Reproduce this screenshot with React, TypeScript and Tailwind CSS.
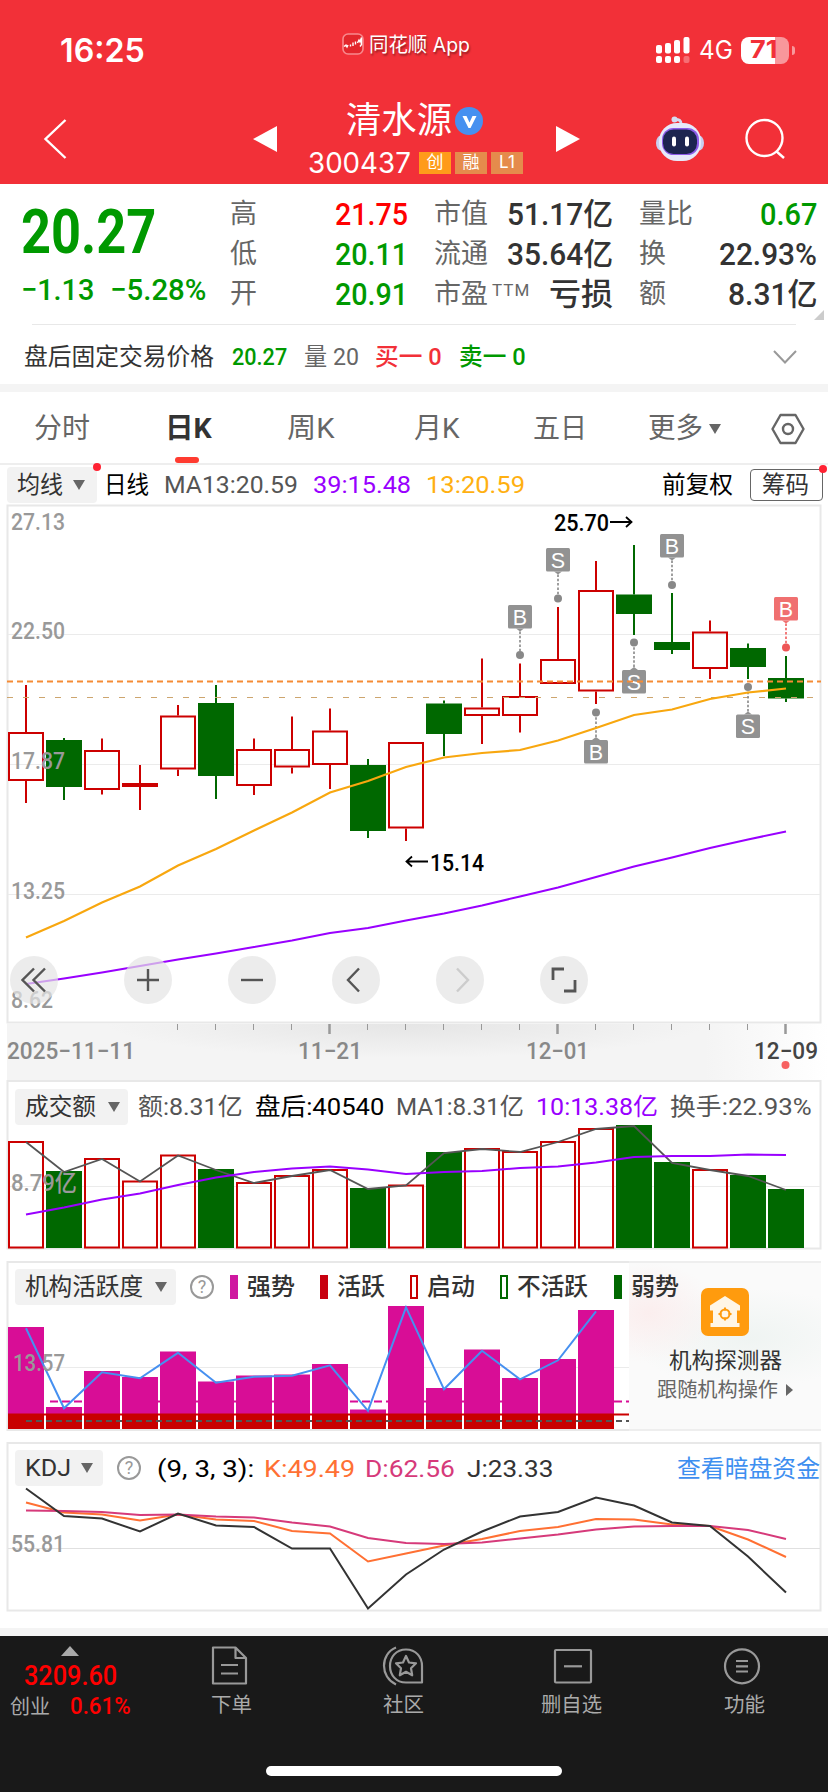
import { useLayoutEffect, useRef } from 'react';
import type { ReactNode } from 'react';
import clsx from 'clsx';

type Candle = { up: boolean; high: number; top: number; bottom: number; low: number };
type Mark = { i: number; type: 'B' | 'S'; box: number; dot: number; active?: boolean };

const UP = '#cc0000';
const DOWN = '#006800';
const STEP = 38;
const FIRST_X = 26;

const cx = (i: number) => FIRST_X + i * STEP;
const toPoints = (ys: number[]) => ys.map((y, i) => `${cx(i)},${y}`).join(' ');

const c = (up: boolean, high: number, top: number, bottom: number, low: number): Candle => ({
  up,
  high,
  top,
  bottom,
  low,
});

const candles: Candle[] = [
  c(true, 685, 732, 781, 803),
  c(false, 738, 740, 787, 800),
  c(true, 738.5, 750, 790, 794.5),
  c(true, 765, 783, 787, 810),
  c(true, 705, 715.5, 769.5, 776),
  c(false, 685, 703, 776, 799),
  c(true, 738.5, 749, 786, 795),
  c(true, 716.5, 749, 767.5, 773.5),
  c(true, 708.5, 730.5, 765, 789),
  c(false, 759, 765, 831, 838),
  c(true, 742, 742, 828.5, 841),
  c(false, 700.5, 703.5, 734, 756),
  c(true, 658.5, 707.5, 716, 744),
  c(true, 663.5, 696, 716, 732.5),
  c(true, 607, 659, 684, 684),
  c(true, 561, 590, 691.5, 704),
  c(false, 545, 594.5, 614, 635),
  c(false, 593, 642, 650, 654),
  c(true, 620.5, 631.5, 669, 679),
  c(false, 643.5, 648, 667, 679),
  c(false, 656, 678, 698.5, 702),
];

const ma13 = [
  937.5, 921, 902.5, 886.5, 865.5, 849, 830.5, 812.5, 792.5, 781, 767, 757.5, 753, 750, 740.5, 728,
  715, 709.5, 699, 692.5, 688.5,
];
const ma39 = [
  984, 978.5, 972.5, 966, 959.5, 953.5, 947, 940.5, 933, 928, 920.5, 913.5, 905.5, 896.5, 887.5,
  877, 866.5, 857.5, 848, 839.5, 831.5,
];

const marks: Mark[] = [
  { i: 13, type: 'B', box: 605, dot: 655 },
  { i: 14, type: 'S', box: 548, dot: 598.5 },
  { i: 15, type: 'B', box: 740, dot: 712.5 },
  { i: 16, type: 'S', box: 670, dot: 642.5 },
  { i: 17, type: 'B', box: 534, dot: 585 },
  { i: 19, type: 'S', box: 714.5, dot: 687 },
  { i: 20, type: 'B', box: 597, dot: 647.5, active: true },
];

const volume = [
  1141, 1171, 1158, 1180.5, 1154.5, 1169, 1182, 1175, 1169, 1188, 1184.5, 1152, 1148, 1151, 1141,
  1128, 1125, 1162, 1169, 1175, 1189,
];
const volumeMa = [
  1214.5, 1207.5, 1199.5, 1193.5, 1185, 1177.5, 1172, 1168.5, 1166.5, 1169.5, 1174, 1172, 1171,
  1168, 1166.5, 1162.5, 1157, 1156, 1156, 1154.5, 1155,
];

const activity = [
  1327, 1407, 1371, 1377, 1351.5, 1381.5, 1375.5, 1374.5, 1364, 1409.5, 1306, 1388, 1349.5, 1378,
  1359, 1310,
];

const kLine = [
  1502.5, 1512.5, 1514.5, 1520.5, 1514.5, 1519.5, 1521, 1531, 1533.5, 1561.5, 1553.5, 1545.5, 1539,
  1531, 1527, 1519, 1519.5, 1524.5, 1526, 1539.5, 1557,
];
const dLine = [
  1510.5, 1511, 1512, 1515, 1514.5, 1516.5, 1517.5, 1522.5, 1526.5, 1538, 1543, 1544, 1542.5,
  1538.5, 1534.5, 1529.5, 1526.5, 1526, 1526, 1530, 1539,
];
const jLine = [
  1488.5, 1516, 1518.5, 1531.5, 1513.5, 1525.5, 1527, 1548.5, 1548.5, 1608.5, 1574.5, 1549.5,
  1531.5, 1516.5, 1512, 1497.5, 1505.5, 1522.5, 1526, 1556.5, 1592.5,
];

// Squeezes its text horizontally so that it fills the width set by className.
function Fit({ className, children }: { className?: string; children: ReactNode }) {
  const outer = useRef<HTMLSpanElement>(null);
  const inner = useRef<HTMLSpanElement>(null);

  useLayoutEffect(() => {
    if (!outer.current || !inner.current) return;
    const scale = outer.current.clientWidth / inner.current.offsetWidth;
    inner.current.style.transform = `scaleX(${scale})`;
  }, []);

  return (
    <span ref={outer} className={clsx('block shrink-0 leading-none whitespace-nowrap', className)}>
      <span ref={inner} className="inline-block origin-left">
        {children}
      </span>
    </span>
  );
}

function Caret({ className }: { className?: string }) {
  return (
    <svg viewBox="0 0 12 10" className={clsx('h-2.5 w-3 shrink-0', className)}>
      <path d="M0 0h12L6 10z" fill="#666" />
    </svg>
  );
}

function Help({ className }: { className?: string }) {
  return (
    <span
      className={clsx(
        'flex size-6 shrink-0 items-center justify-center rounded-full border-2 border-[#999] text-[18px] leading-none font-normal text-[#999]',
        className,
      )}
    >
      ?
    </span>
  );
}

function AxisLabel({ x, y, w, children }: { x: number; y: number; w: number; children: string }) {
  return (
    <text x={x} y={y} textLength={w} lengthAdjust="spacingAndGlyphs" fontSize="24" fontWeight="500" fill="#999">
      {children}
    </text>
  );
}

function StatusBar() {
  return (
    <div className="flex h-[88px] items-center pl-[60px] font-['Inter','Noto_Sans_CJK_SC',sans-serif]">
      <Fit className="mt-3 w-[85px] text-[33px] font-semibold">16:25</Fit>
      <svg viewBox="0 0 22 22" className="ml-[197px] size-[22px]" fill="none">
        <rect x="1" y="1" width="20" height="20" rx="5" fill="#e3262c" stroke="#f8898d" strokeWidth="1.6" />
        <path d="M2 13.500l2-1.500 1 2 1-2M8.500 13.500v-2M11 13V9.500M13.500 11.500V8.500M15.500 10l1.500-3 1 2 1.500-4.500v7l-1.500 2" stroke="#fff" strokeWidth="1.4" />
      </svg>
      <Fit className="mt-0.5 ml-[5px] w-[101px] text-[20px] [text-shadow:1px_2px_2px_rgba(0,0,0,0.4)]">同花顺 App</Fit>
      <svg viewBox="0 0 34 26" className="mt-3 ml-[186px] h-[26px] w-[34px]" fill="#fff">
        <rect x="0" y="8" width="6" height="8.5" rx="2" />
        <rect x="9" y="6" width="6" height="10.5" rx="2" />
        <rect x="18" y="3" width="6" height="13.5" rx="2" />
        <rect x="27.5" y="0" width="6" height="16.5" rx="2" />
        <rect x="0" y="19" width="6" height="7" rx="2" />
        <rect x="9" y="19" width="6" height="7" rx="2" />
        <rect x="18" y="19" width="6" height="7" rx="2" />
        <rect x="27.5" y="19" width="6" height="7" rx="2" opacity="0.3" />
      </svg>
      <Fit className="mt-3 ml-[9px] w-[34px] text-[25px]">4G</Fit>
      <div className="mt-3 ml-2 flex items-center gap-[3px]">
        <div className="flex h-[27px] w-12 items-center rounded-lg bg-[linear-gradient(to_right,#fff_71%,#f8979b_71%)] pl-[9px] text-[#f23038]">
          <Fit className="w-[27px] text-[24px] font-bold">71</Fit>
        </div>
        <div className="h-[9px] w-[3px] rounded-r bg-[#f8979b]" />
      </div>
    </div>
  );
}

function Robot() {
  return (
    <svg viewBox="0 0 48 46" className="mt-1.5 ml-[76px] h-[46px] w-12" fill="none">
      <path d="M25 8c0-4-2-4.500-6-4.500" stroke="#d5dcf2" strokeWidth="3" />
      <circle cx="18.500" cy="3.500" r="3" fill="#d5dcf2" />
      <ellipse cx="5" cy="27" rx="5" ry="7.500" fill="#c8cff0" />
      <ellipse cx="43" cy="27" rx="5" ry="7.500" fill="#c8cff0" />
      <rect x="3" y="7" width="42" height="38" rx="18" fill="#e6eafa" />
      <rect x="6" y="12" width="37" height="27" rx="11.500" fill="#8c5be8" />
      <rect x="7" y="13.500" width="34" height="24.500" rx="10.500" fill="#1c2550" />
      <rect x="16" y="20.500" width="4" height="10" rx="2" fill="#fff" />
      <rect x="29" y="20.500" width="4" height="10" rx="2" fill="#fff" />
    </svg>
  );
}

function NavBar() {
  return (
    <div className="flex h-24 items-center pl-[43px]">
      <svg viewBox="0 0 24 40" className="mt-1.5 h-10 w-6" fill="none" stroke="#fff" strokeWidth="2.4">
        <path d="M22.500 1L2.500 20l20 19" />
      </svg>
      <svg viewBox="0 0 24 26" className="mt-1.5 ml-[186px] h-[26px] w-6">
        <path d="M24 0v26L0 13z" fill="#fff" />
      </svg>
      <div className="mt-2 ml-[31px] flex w-[216px] flex-col items-start">
        <div className="flex items-center pl-[38px]">
          <Fit className="w-[106px] text-[36px]">清水源</Fit>
          <svg viewBox="0 0 28 28" className="ml-[3px] size-7">
            <circle cx="14" cy="14" r="14" fill="#4690f0" />
            <path d="M7.500 9h4l3 6.500L17.500 9h4l-6 12h-2z" fill="#fff" />
          </svg>
        </div>
        <div className="mt-2.5 flex items-center gap-1 font-['Inter','Noto_Sans_CJK_SC',sans-serif]">
          <Fit className="mr-1 w-[103px] text-[28px]">300437</Fit>
          <span className="flex h-[22px] w-8 items-center justify-center bg-[#ff9b1a] text-[17px] text-white">创</span>
          <span className="flex h-[22px] w-8 items-center justify-center bg-[#e58b4c] text-[17px] text-white">融</span>
          <span className="flex h-[22px] w-8 items-center justify-center bg-[#e58b4c] text-[17px] text-white">L1</span>
        </div>
      </div>
      <svg viewBox="0 0 24 26" className="mt-1.5 ml-8 h-[26px] w-6">
        <path d="M0 0v26l24-13z" fill="#fff" />
      </svg>
      <Robot />
      <svg viewBox="0 0 42 42" className="mt-1.5 ml-10 size-[42px]" fill="none" stroke="#fff" strokeWidth="2.400">
        <circle cx="20.500" cy="20" r="18" />
        <path d="M32 33l8 7" />
      </svg>
    </div>
  );
}

function Stat({ label, className, children }: { label: ReactNode; className?: string; children: ReactNode }) {
  return (
    <div className={clsx('flex h-10 items-center justify-between', className)}>
      <span className="flex items-start text-[27px] leading-none font-normal text-[#666]">{label}</span>
      {children}
    </div>
  );
}

function Quote() {
  return (
    <section className="h-[200px]">
      <div className="flex h-[140px]">
        <div className="flex w-[230px] flex-col pl-[21px] text-[#009900]">
          <Fit className="mt-[17px] w-[135px] text-[62px] font-bold">20.27</Fit>
          <div className="mt-3 flex gap-4 text-[30px] font-medium">
            <Fit className="w-[73px]">−1.13</Fit>
            <Fit className="w-[96px]">−5.28%</Fit>
          </div>
        </div>
        <div className="w-[178px] pt-[10px] text-[31px] font-medium text-[#009900]">
          <Stat label="高" className="text-[#ff0000]">
            <Fit className="w-[73px]">21.75</Fit>
          </Stat>
          <Stat label="低">
            <Fit className="w-[73px]">20.11</Fit>
          </Stat>
          <Stat label="开">
            <Fit className="w-[73px]">20.91</Fit>
          </Stat>
        </div>
        <div className="ml-[26px] w-[179px] pt-[10px] text-[31px] font-medium text-[#333]">
          <Stat label="市值">
            <Fit className="w-[106px]">51.17亿</Fit>
          </Stat>
          <Stat label="流通">
            <Fit className="w-[106px]">35.64亿</Fit>
          </Stat>
          <Stat
            label={
              <>
                市盈<sup className="top-0 ml-1 pt-px text-[17px] leading-none tracking-[1px]">TTM</sup>
              </>
            }
          >
            <Fit className="w-[64px]">亏损</Fit>
          </Stat>
        </div>
        <div className="ml-[26px] w-[178px] pt-[10px] text-[31px] font-medium text-[#333]">
          <Stat label="量比" className="text-[#009900]">
            <Fit className="w-[57px]">0.67</Fit>
          </Stat>
          <Stat label="换">
            <Fit className="w-[98px]">22.93%</Fit>
          </Stat>
          <Stat label="额">
            <Fit className="w-[89px]">8.31亿</Fit>
          </Stat>
        </div>
        <svg viewBox="0 0 10 10" className="mt-[126px] ml-[-3px] size-2.5 shrink-0">
          <path d="M10 0v10H0z" fill="#ccc" />
        </svg>
      </div>
      <div className="mr-8 ml-8 h-px bg-[#e8e8e8]" />
      <div className="flex h-[59px] items-center pt-1 pl-6 text-[24px]">
        <Fit className="w-[190px] text-[#333]">盘后固定交易价格</Fit>
        <Fit className="ml-[18px] w-[55px] font-medium text-[#009900]">20.27</Fit>
        <Fit className="ml-[17px] w-[55px] text-[#666]">量 20</Fit>
        <Fit className="ml-4 w-[67px] font-medium text-[#f23038]">买一 0</Fit>
        <Fit className="ml-[17px] w-[67px] font-medium text-[#009900]">卖一 0</Fit>
        <svg viewBox="0 0 24 14" className="ml-[247px] h-3.5 w-6" fill="none" stroke="#999" strokeWidth="2">
          <path d="M1 1l11 11.500L23 1" />
        </svg>
      </div>
    </section>
  );
}

function Tabs() {
  return (
    <nav className="flex h-[73px] items-center border-b-2 border-[#eee] pt-0.5 pl-[34px] text-[28px] text-[#666]">
      <Fit className="w-[56px]">分时</Fit>
      <div className="relative ml-[75px] flex h-full items-center">
        <Fit className="w-[47px] font-bold text-[#333]">日K</Fit>
        <div className="absolute bottom-0 left-[10px] h-1.5 w-6 rounded-full bg-[#ff3b30]" />
      </div>
      <Fit className="ml-[75px] w-[48px]">周K</Fit>
      <Fit className="ml-[79px] w-[46px]">月K</Fit>
      <Fit className="ml-[73px] w-[54px]">五日</Fit>
      <Fit className="ml-[61px] w-[55px]">更多</Fit>
      <Caret className="ml-[6px]" />
      <svg viewBox="0 0 34 32" className="ml-[50px] h-8 w-[34px]" fill="none" stroke="#666" strokeWidth="2.400">
        <path d="M9.500 2h15L32.500 16l-8 14h-15L1.500 16z" strokeLinejoin="round" />
        <circle cx="17" cy="16" r="5" />
      </svg>
    </nav>
  );
}

function IndicatorBar() {
  return (
    <div className="flex h-[39px] items-center pl-[7px] text-[24px]">
      <div className="relative flex h-9 w-[90px] items-center rounded bg-[#f2f2f2] pl-2.5 text-[#333]">
        <Fit className="w-[46px]">均线</Fit>
        <Caret className="ml-2.5" />
        <span className="absolute -top-1 -right-1 size-2 rounded-full bg-[#ff2233]" />
      </div>
      <Fit className="ml-[7px] w-[45px]">日线</Fit>
      <Fit className="ml-[15px] w-[134px] text-[#555]">MA13:20.59</Fit>
      <Fit className="ml-[15px] w-[98px] text-[#9900ff]">39:15.48</Fit>
      <Fit className="ml-[15px] w-[99px] text-[#ffb011]">13:20.59</Fit>
      <Fit className="ml-[137px] w-[71px]">前复权</Fit>
      <div className="relative ml-[17px] flex h-8 w-[73px] items-center rounded border-[1.5px] border-[#666] pl-[11px] text-[#333]">
        <Fit className="w-[47px]">筹码</Fit>
        <span className="absolute -top-[5px] -right-[5px] size-2 rounded-full bg-[#ff2233]" />
      </div>
    </div>
  );
}

function CandleShape({ candle, x }: { candle: Candle; x: number }) {
  const { up, high, top, bottom, low } = candle;
  const color = up ? UP : DOWN;
  return (
    <g>
      <path d={`M${x} ${high}V${top}M${x} ${bottom}V${low}`} stroke={color} strokeWidth="2" />
      {up ? (
        <rect x={x - 17} y={top + 1} width="34" height={bottom - top - 2} fill="none" stroke={color} strokeWidth="2" />
      ) : (
        <rect x={x - 18} y={top} width="36" height={bottom - top} fill={color} />
      )}
    </g>
  );
}

function MarkShape({ mark }: { mark: Mark }) {
  const x = cx(mark.i);
  const above = mark.box < mark.dot;
  const edge = above ? mark.box + 23.5 : mark.box;
  const tip = above ? edge + 3 : edge - 3;
  return (
    <g>
      <line x1={x} y1={tip} x2={x} y2={mark.dot} stroke={mark.active ? '#f15b5b' : '#888'} strokeWidth="1.6" strokeDasharray="2.500 1.800" />
      <circle cx={x} cy={mark.dot} r="4" fill={mark.active ? '#ee5555' : '#888'} />
      <rect x={x - 12} y={mark.box} width="24" height="23.500" rx="1.500" fill={mark.active ? '#f07070' : '#929292'} />
      <path d={`M${x - 4} ${edge}H${x + 4}L${x} ${tip}z`} fill={mark.active ? '#f07070' : '#929292'} />
      <text x={x} y={mark.box + 19.5} textAnchor="middle" fontSize="21.500" fill="#fff" className="font-['Liberation_Sans',sans-serif]">
        {mark.type}
      </text>
    </g>
  );
}

function Control({ muted, children }: { muted?: boolean; children: ReactNode }) {
  return (
    <button className="flex size-12 items-center justify-center rounded-full bg-[#e4e4e4]/70">
      <svg viewBox="0 0 26 26" className="size-[26px]" fill="none" stroke={muted ? '#ccc' : '#555'} strokeWidth="2.400">
        {children}
      </svg>
    </button>
  );
}

function KLineChart() {
  return (
    <div className="relative h-[520px]">
      <svg viewBox="0 504 828 520" className="block h-[520px] w-[828px]">
        <rect x="7.500" y="505.500" width="813" height="517" fill="none" stroke="#e8e8e8" strokeWidth="2" />
        <path d="M8 634.500H820M8 764.500H820M8 894.500H820" stroke="#ebebeb" strokeWidth="1" />
        {candles.map((candle, i) => (
          <CandleShape key={i} candle={candle} x={cx(i)} />
        ))}
        <path d="M7 697.500H820" stroke="#cda56e" strokeWidth="1" strokeDasharray="6 10" />
        <polyline points={toPoints(ma39)} fill="none" stroke="#9900ff" strokeWidth="2" />
        <AxisLabel x={11} y={529.5} w={54}>27.13</AxisLabel>
        <AxisLabel x={11} y={639} w={54}>22.50</AxisLabel>
        <AxisLabel x={11} y={768.5} w={54}>17.87</AxisLabel>
        <AxisLabel x={11} y={898.5} w={54}>13.25</AxisLabel>
        <AxisLabel x={11} y={1008} w={42}>8.62</AxisLabel>
        {marks.map((mark) => (
          <MarkShape key={mark.i} mark={mark} />
        ))}
        <path d="M7 681.500H821" stroke="#f58b35" strokeWidth="2.200" strokeDasharray="6 4" />
        <polyline points={toPoints(ma13)} fill="none" stroke="#f8a70f" strokeWidth="2.200" />
        <g fontSize="24" fontWeight="500">
          <text x="554" y="530.500" textLength="55" lengthAdjust="spacingAndGlyphs">25.70</text>
          <text x="430" y="870.500" textLength="54" lengthAdjust="spacingAndGlyphs">15.14</text>
        </g>
        <path d="M610 522H631M626 517L631.500 522L626 527M428 861.500H407M412 856.500L406.500 861.500L412 866.500" fill="none" stroke="#000" strokeWidth="1.800" />
      </svg>
      <div className="absolute bottom-5 left-2.5 flex gap-14">
        <div className="mr-2.5">
          <Control>
            <path d="M13 1.500L1.500 13L13 24.500M24 1.500L12.500 13L24 24.500" />
          </Control>
        </div>
        <Control>
          <path d="M13 2v22M2 13h22" />
        </Control>
        <Control>
          <path d="M2 13h22" />
        </Control>
        <Control>
          <path d="M16 1.500L5 13L16 24.500" />
        </Control>
        <Control muted>
          <path d="M10 1.500L21 13L10 24.500" />
        </Control>
        <Control>
          <path d="M2 13V2h11M24 13v11H13" strokeWidth="2.800" />
        </Control>
      </div>
    </div>
  );
}

function DateAxis() {
  const ticks = Array.from({ length: 17 }, (_, i) => i + 4);
  return (
    <div className="ml-[7px] flex h-14 bg-[radial-gradient(ellipse_300px_34px_at_400px_0px,#e5e5e5,transparent),linear-gradient(to_right,#f4f4f4_85%,#fff_100%)]">
      <svg viewBox="7 1024 821 56" className="block h-14 w-[821px]">
        {ticks.map((i) => {
          const major = i % 6 === 2;
          return (
            <line
              key={i}
              x1={cx(i) - 0.5}
              x2={cx(i) - 0.5}
              y1="1024"
              y2={major ? 1034 : 1030}
              stroke="#999"
              strokeWidth={major ? 2.5 : 1}
            />
          );
        })}
        <g fontSize="24" fontWeight="500" fill="#888">
          <text x="7" y="1059" textLength="128" lengthAdjust="spacingAndGlyphs">2025−11−11</text>
          <text x="298" y="1059" textLength="64" lengthAdjust="spacingAndGlyphs">11−21</text>
          <text x="526" y="1059" textLength="63" lengthAdjust="spacingAndGlyphs">12−01</text>
          <text x="754" y="1059" textLength="64" lengthAdjust="spacingAndGlyphs" fill="#444">12−09</text>
        </g>
        <circle cx="785.500" cy="1065" r="4" fill="#f76262" />
      </svg>
    </div>
  );
}

function PanelSelect({ className, children }: { className?: string; children: ReactNode }) {
  return (
    <div className={clsx('flex h-9 shrink-0 items-center rounded bg-[#f2f2f2] pl-2.5 text-[#333]', className)}>
      {children}
    </div>
  );
}

function VolumePanel() {
  return (
    <section className="relative h-[170px]">
      <svg viewBox="0 1080 828 170" className="block h-[170px] w-[828px]">
        <rect x="7.500" y="1081" width="813" height="167.500" fill="none" stroke="#e8e8e8" strokeWidth="2" />
        <path d="M8 1186.500H820" stroke="#ebebeb" />
        {volume.map((y, i) =>
          candles[i].up ? (
            <rect key={i} x={cx(i) - 17} y={y + 1} width="34" height={1246.5 - y} fill="none" stroke={UP} strokeWidth="2" />
          ) : (
            <rect key={i} x={cx(i) - 18} y={y} width="36" height={1248 - y} fill={DOWN} />
          ),
        )}
        <polyline points={toPoints(volume.map((y) => y + 1))} fill="none" stroke="#555" strokeWidth="1.800" />
        <polyline points={toPoints(volumeMa)} fill="none" stroke="#9900ff" strokeWidth="2" />
        <AxisLabel x={11} y={1190.5} w={66}>8.79亿</AxisLabel>
      </svg>
      <div className="absolute top-[9px] left-[15px] flex items-center text-[24px] text-[#555]">
        <PanelSelect className="w-[113px]">
          <Fit className="w-[71px]">成交额</Fit>
          <Caret className="ml-3" />
        </PanelSelect>
        <Fit className="ml-[10px] w-[105px]">额:8.31亿</Fit>
        <Fit className="ml-[12px] w-[129px] text-black">盘后:40540</Fit>
        <Fit className="ml-[12px] w-[128px]">MA1:8.31亿</Fit>
        <Fit className="ml-[12px] w-[122px] text-[#9900ff]">10:13.38亿</Fit>
        <Fit className="ml-[12px] w-[142px]">换手:22.93%</Fit>
      </div>
    </section>
  );
}

function ActivityPanel() {
  return (
    <section className="relative mt-[11px] h-[170px]">
      <div className="flex">
        <svg viewBox="0 1261 629 170" className="block h-[170px] w-[629px] shrink-0">
          <path d="M629 1262H7.500V1430H629" fill="none" stroke="#e8e8e8" strokeWidth="2" />
          <path d="M8 1367.500H629" stroke="#ebebeb" />
          <path d="M50 1401.500H629" stroke="#d80d96" strokeWidth="2" strokeDasharray="8 4" />
          <path d="M8 1414.500H629" stroke={UP} strokeWidth="2" />
          {activity.map((y, i) => (
            <g key={i}>
              <rect x={cx(i) - 18} y={y} width="36" height={1414 - y} fill="#d80d96" />
              <rect x={cx(i) - 18} y="1413.500" width="36" height="15.500" fill="#c80000" />
            </g>
          ))}
          <path d="M26 1421H629" stroke="#555" strokeWidth="2" strokeDasharray="6 4" />
          <polyline points={toPoints(activity.map((y) => y + 1.3))} fill="none" stroke="#4690f0" strokeWidth="2" />
          <AxisLabel x={13} y={1371} w={52}>13.57</AxisLabel>
        </svg>
        <div className="flex h-[170px] w-48 flex-col items-center border-y-2 border-[#eee] bg-[radial-gradient(ellipse_70px_50px_at_20px_50px,#fbeeee,transparent),radial-gradient(ellipse_120px_50px_at_120px_75px,#eff4f2,transparent)] bg-[#fafafa] pt-[25px]">
          <svg viewBox="0 0 48 48" className="size-12" fill="none">
            <rect width="48" height="48" rx="7" fill="#ff9b0e" />
            <path d="M24 8L9 17.500v5h3V35H9.500v4h29v-4H36V22.500h3v-5z" fill="#fff6e6" />
            <circle cx="24" cy="26" r="4.500" stroke="#ff9b0e" strokeWidth="2" />
            <path d="M24 19.500v3M24 29.500v3M17.500 26h3M27.500 26h3" stroke="#ff9b0e" strokeWidth="2" />
          </svg>
          <Fit className="mt-[14px] w-[113px] text-[22px] text-[#333]">机构探测器</Fit>
          <div className="mt-[8px] flex items-center">
            <Fit className="w-[121px] text-[20px] text-[#666]">跟随机构操作</Fit>
            <svg viewBox="0 0 7 12" className="ml-2 h-3 w-[7px]">
              <path d="M0 0l7 6-7 6z" fill="#666" />
            </svg>
          </div>
        </div>
      </div>
      <div className="absolute top-2 left-[15px] flex items-center text-[24px] font-medium text-[#333]">
        <PanelSelect className="w-[161px] font-normal">
          <Fit className="w-[118px]">机构活跃度</Fit>
          <Caret className="ml-3" />
        </PanelSelect>
        <Help className="ml-3.5" />
        <span className="ml-4 h-6 w-2 bg-[#cf18a0]" />
        <Fit className="ml-[9px] w-[48px]">强势</Fit>
        <span className="ml-[25px] h-6 w-2 bg-[#c8000f]" />
        <Fit className="ml-[9px] w-[48px]">活跃</Fit>
        <span className="ml-[25px] h-6 w-2 border-2 border-[#c80000]" />
        <Fit className="ml-[9px] w-[48px]">启动</Fit>
        <span className="ml-[25px] h-6 w-2 border-2 border-[#006800]" />
        <Fit className="ml-[9px] w-[71px]">不活跃</Fit>
        <span className="ml-[26px] h-6 w-2 bg-[#006800]" />
        <Fit className="ml-[9px] w-[48px]">弱势</Fit>
      </div>
    </section>
  );
}

function KdjPanel() {
  return (
    <section className="relative mt-[11px] h-[170px]">
      <svg viewBox="0 1442 828 170" className="block h-[170px] w-[828px]">
        <rect x="7.500" y="1443" width="813" height="167.500" fill="none" stroke="#e8e8e8" strokeWidth="2" />
        <path d="M8 1548.500H820" stroke="#e0e0e0" />
        <AxisLabel x={11} y={1552} w={54}>55.81</AxisLabel>
        <g fill="none" strokeWidth="2">
          <polyline points={toPoints(kLine)} stroke="#ff7033" />
          <polyline points={toPoints(dLine)} stroke="#d63a7a" />
          <polyline points={toPoints(jLine)} stroke="#333" />
        </g>
      </svg>
      <div className="absolute top-2 left-[15px] flex items-center text-[24px]">
        <PanelSelect className="w-[88px]">
          <Fit className="w-[46px]">KDJ</Fit>
          <Caret className="ml-2.5" />
        </PanelSelect>
        <Help className="ml-3.5" />
        <Fit className="mt-0.5 ml-4 w-[97px]">(9, 3, 3):</Fit>
        <Fit className="mt-0.5 ml-[10px] w-[91px] text-[#ff7033]">K:49.49</Fit>
        <Fit className="mt-0.5 ml-[10px] w-[90px] text-[#d63a7a]">D:62.56</Fit>
        <Fit className="mt-0.5 ml-[12px] w-[86px] text-[#333]">J:23.33</Fit>
        <Fit className="mt-0.5 ml-[124px] w-[143px] text-[#3e8ff0]">查看暗盘资金</Fit>
      </div>
    </section>
  );
}

function Footer() {
  return (
    <footer className="flex h-[156px] flex-col bg-[#191919] text-[20px] text-[#aaa]">
      <div className="flex h-[130px] pt-[10px]">
        <div className="w-[140px]">
          <svg viewBox="0 0 18 10" className="ml-[61px] h-2.5 w-[18px]">
            <path d="M9 0l9 10H0z" fill="#aaa" />
          </svg>
          <Fit className="mt-[6px] ml-6 w-[93px] text-[28px] font-medium text-[#ff0000]">3209.60</Fit>
          <div className="mt-[5px] flex items-center">
            <Fit className="mt-px ml-[10px] w-[40px]">创业</Fit>
            <Fit className="ml-5 w-[61px] text-[23px] font-medium text-[#ff0000]">0.61%</Fit>
          </div>
        </div>
        <div className="ml-[60px] flex w-[62px] flex-col items-center">
          <svg viewBox="0 0 40 40" className="mr-1 size-10" fill="none" stroke="#999" strokeWidth="2.200">
            <path d="M4 1.500h22.500L37 12v25.500H4z M26.500 1.500V12H37" strokeLinejoin="round" />
            <path d="M12 19h17M12 27.500h17" />
          </svg>
          <Fit className="mt-[9px] w-[41px]">下单</Fit>
        </div>
        <div className="ml-[110px] flex w-[62px] flex-col items-center">
          <svg viewBox="0 0 42 40" className="h-10 w-[42px]" fill="none" stroke="#999" strokeWidth="2.200">
            <path d="M14 1.500C-2 8-2 31 14 38.500" />
            <path d="M24 3.500C14 3.500 8 11 8 20s6 16.500 16 16.500h16V20C40 11 34 3.500 24 3.500z" strokeLinejoin="round" />
            <path d="M24 10l3 6.500 7 .8-5 5 1.200 7-6.200-3.500-6.200 3.500 1.200-7-5-5 7-.8z" strokeLinejoin="round" />
          </svg>
          <Fit className="mt-[9px] w-[41px]">社区</Fit>
        </div>
        <div className="ml-[106px] flex w-[62px] flex-col items-center">
          <svg viewBox="0 0 40 40" className="ml-1 size-10" fill="none" stroke="#999" strokeWidth="2.200">
            <rect x="2" y="4" width="36" height="32.500" rx="1" />
            <path d="M11 20.300h18" />
          </svg>
          <Fit className="mt-[9px] w-[61px]">删自选</Fit>
        </div>
        <div className="ml-[111px] flex w-[62px] flex-col items-center">
          <svg viewBox="0 0 40 40" className="mr-1 size-10" fill="none" stroke="#999" strokeWidth="2.200">
            <circle cx="20" cy="20.300" r="17" />
            <path d="M14 15h12M14 20.300h12M14 25.500h12" />
          </svg>
          <Fit className="mt-[9px] w-[41px]">功能</Fit>
        </div>
      </div>
      <div className="mx-auto h-2.5 w-[296px] rounded-full bg-white" />
    </footer>
  );
}

export default function App() {
  return (
    <main className="h-[1792px] w-[828px] overflow-hidden bg-white font-['Roboto','Noto_Sans_CJK_SC',sans-serif] text-black">
      <header className="h-[184px] bg-[#f23038] text-white">
        <StatusBar />
        <NavBar />
      </header>
      <Quote />
      <div className="h-2 bg-[#f4f4f4]" />
      <Tabs />
      <IndicatorBar />
      <KLineChart />
      <DateAxis />
      <VolumePanel />
      <ActivityPanel />
      <KdjPanel />
      <div className="mt-4 h-2 bg-[#f4f4f4]" />
      <Footer />
    </main>
  );
}
